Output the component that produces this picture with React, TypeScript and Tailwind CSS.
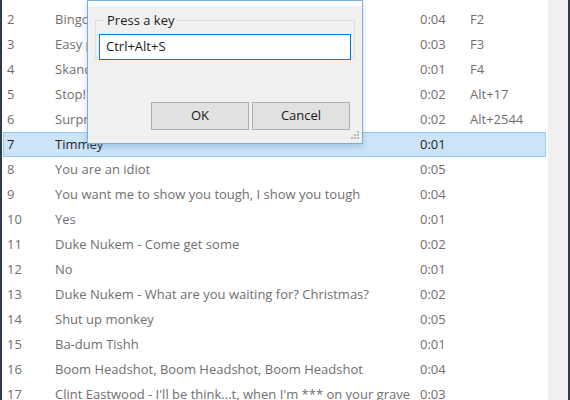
const sounds = [
  { n: 2, name: 'Bingo', time: '0:04', key: 'F2' },
  { n: 3, name: 'Easy peasy', time: '0:03', key: 'F3' },
  { n: 4, name: 'Skandal', time: '0:01', key: 'F4' },
  { n: 5, name: 'Stop!', time: '0:02', key: 'Alt+17' },
  { n: 6, name: 'Surprise', time: '0:02', key: 'Alt+2544' },
  { n: 7, name: 'Timmey', time: '0:01', key: '' },
  { n: 8, name: 'You are an idiot', time: '0:05', key: '' },
  { n: 9, name: 'You want me to show you tough, I show you tough', time: '0:04', key: '' },
  { n: 10, name: 'Yes', time: '0:01', key: '' },
  { n: 11, name: 'Duke Nukem - Come get some', time: '0:02', key: '' },
  { n: 12, name: 'No', time: '0:01', key: '' },
  { n: 13, name: 'Duke Nukem - What are you waiting for? Christmas?', time: '0:02', key: '' },
  { n: 14, name: 'Shut up monkey', time: '0:05', key: '' },
  { n: 15, name: 'Ba-dum Tishh', time: '0:01', key: '' },
  { n: 16, name: 'Boom Headshot, Boom Headshot, Boom Headshot', time: '0:04', key: '' },
  { n: 17, name: "Clint Eastwood - I'll be think...t, when I'm *** on your grave", time: '0:03', key: '' },
]

export default function App() {
  const selected = 7

  return (
    <div
      className="relative w-[570px] h-[400px] overflow-hidden bg-white flex text-[13px]"
      style={{ fontFamily: '"Open Sans", "Noto Sans", sans-serif' }}
    >
      {/* window edges */}
      <div className="w-[2px] bg-[#2e3b4e]" />
      <div className="flex-1 pt-[7px] pl-[1px]">
        {sounds.map((s) => {
          const active = s.n === selected
          return (
            <div
              key={s.n}
              className={
                active
                  ? 'w-[543px] h-[25px] flex items-center border border-[#99c9ef] bg-[#cce4f7] text-[#1e1e1e]'
                  : 'w-[543px] h-[25px] flex items-center border border-transparent text-[#6f6f6f]'
              }
            >
              <span className="w-[51px] pl-[3px] shrink-0">{s.n}</span>
              <span className="w-[365px] shrink-0 whitespace-nowrap overflow-hidden">{s.name}</span>
              <span className="w-[50px] shrink-0">{s.time}</span>
              <span className="shrink-0">{s.key}</span>
            </div>
          )
        })}
      </div>
      <div className="w-[20px] bg-[#f0f0f0]" />
      <div className="w-[2px] bg-[#2e3b4e]" />

      {/* hotkey dialog */}
      <div className="absolute left-[87px] top-0 w-[276px] h-[144px] border border-[#7aaee0] bg-[#f0f0f0] flex flex-col shadow-[0_3px_6px_rgba(90,140,200,0.35)]">
        <div className="h-[5px] bg-white" />
        <fieldset className="mx-[7px] mt-[6px] h-[46px] border border-[#dcdcdc] px-[3px]">
          <legend className="ml-[5px] px-[3px] leading-[16px] text-[#1a1a1a]">Press a key</legend>
          <div className="mt-[6px] h-[26px] border border-[#0078d7] bg-white flex items-center px-[6px] text-[#1a1a1a]">
            Ctrl+Alt+S
          </div>
        </fieldset>
        <div className="flex justify-end gap-[3px] mt-[44px] mr-[12px]">
          <button className="w-[98px] h-[28px] bg-[#e1e1e1] border border-[#adadad] text-[#1a1a1a]">OK</button>
          <button className="w-[98px] h-[28px] bg-[#e1e1e1] border border-[#adadad] text-[#1a1a1a]">Cancel</button>
        </div>
        <div className="flex justify-end mr-[3px] mt-[1px]">
          <svg width="8" height="8" viewBox="0 0 8 8">
            <rect x="6" y="0" width="2" height="2" fill="#b8b8b8" />
            <rect x="3" y="3" width="2" height="2" fill="#b8b8b8" />
            <rect x="6" y="3" width="2" height="2" fill="#b8b8b8" />
            <rect x="0" y="6" width="2" height="2" fill="#b8b8b8" />
            <rect x="3" y="6" width="2" height="2" fill="#b8b8b8" />
            <rect x="6" y="6" width="2" height="2" fill="#b8b8b8" />
          </svg>
        </div>
      </div>
    </div>
  )
}
